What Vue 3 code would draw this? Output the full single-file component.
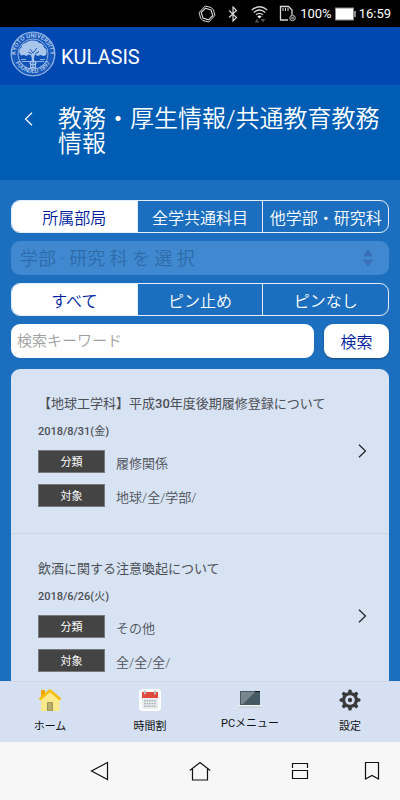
<template>
  <div class="screen">
    <div class="status">
      <svg class="status-rotate" width="18" height="18" viewBox="0 0 18 18">
        <g fill="none" stroke="#d8d8d8">
          <path d="M7.500 3.200 13 5l1.800 5.500-4.300 4.300L5 13 3.200 7.500z" stroke-width="1.100" />
          <path d="M1.200 7.500 7.200 1l6 1.500M16.800 10.500l-6 6.500-6-1.500" />
          <path d="M1.200 7.500 2.500 13l2.300 2.500M13.200 2.500 15.500 5l1.300 5.500" />
        </g>
      </svg>
      <svg class="status-bt" width="10" height="16" viewBox="0 0 10 16">
        <path d="M1 4.500 8.500 11.500 5 15V1l3.500 3.500L1 11.500" fill="none" stroke="#d8d8d8" stroke-width="1.200" />
      </svg>
      <svg class="status-wifi" width="17" height="18" viewBox="0 0 17 18">
        <g fill="none" stroke="#d8d8d8" stroke-width="1.300">
          <path d="M.8 5Q8.500-1.500 16.200 5M2.800 7.500q5.700-5 11.400 0M5 9.800q3.500-2.800 7 0" />
        </g>
        <path d="M6.300 11.200q2.200-1.500 4.400 0L8.500 13.500z" fill="#fff" />
        <path d="M6 14l2.200 3.500H3.800zM9.800 14h4.400L12 17.500z" fill="#555" />
      </svg>
      <svg class="status-sd" width="18" height="17" viewBox="0 0 18 17">
        <path d="M9 15H1.500V1.500h8L13 5v5" fill="none" stroke="#d8d8d8" stroke-width="1.300" />
        <path d="M4 3v3M6.500 3v3M9 3v3" stroke="#d8d8d8" />
        <circle cx="13.500" cy="13" r="2.800" fill="#222" stroke="#aaa" />
        <path d="m11.800 11.300 3.400 3.400m0-3.400-3.400 3.400" stroke="#aaa" />
      </svg>
      <span>100%</span>
      <svg class="status-battery" width="21" height="14" viewBox="0 0 21 14">
        <path d="M0 .5h19v3.500h2v6h-2v3.500H0z" fill="#8a8a8a" />
        <path d="M1 1.500h17v11H1z" fill="#fff" />
      </svg>
      <span>16:59</span>
    </div>

    <header class="brand">
      <svg width="46" height="46" viewBox="0 0 46 46">
        <defs>
          <path id="arc-top" d="M5.800 25.500A17.300 17.300 0 1 1 40.200 25.500" />
          <path id="arc-bottom" d="M3.800 27A19.800 19.800 0 0 0 42.200 27" />
        </defs>
        <circle cx="23" cy="23" r="21.800" fill="#1a5abb" stroke="#8fb2e3" stroke-width="1.300" />
        <circle cx="23" cy="23" r="15" fill="#0d50b6" stroke="#8fb2e3" />
        <text class="seal-text"><textPath href="#arc-top" startOffset="50%">KYOTO UNIVERSITY</textPath></text>
        <text class="seal-text"><textPath href="#arc-bottom" startOffset="50%">FOUNDED 1897</textPath></text>
        <path
          d="M9.500 22q-1-4 2-5.500 0-4 4-4.500 2.500-3 7-2.500 5-.5 7 2.500 4 .5 4.500 4.500 3 1.500 2.500 5.500 0 2.500-3 3l-3-1-3 1-2-1.500-1 1q-1 3 0 6l3 2h-9l3-2q.8-3-.5-6l-2-1-3 1.500-2-1.200-3 .7z"
          fill="#a9c5eb"
        />
        <path d="m20 18 3 4 4-5m-9 4 4 2m3 0 4-2.500" stroke="#1a5abb" fill="none" />
        <path d="M11 28.500h5m-4 2h22m-4-2h5" stroke="#8fb2e3" />
        <path d="M20.500 30.500h5v6h-5zM23 30.500v6M20.500 33.500h5" fill="#3a74c9" stroke="#a9c5eb" />
      </svg>
      <span class="brand-name">KULASIS</span>
    </header>

    <div class="heading">
      <button class="back" type="button" aria-label="戻る">
        <svg width="9" height="14" viewBox="0 0 9 14">
          <path d="M8 .8 1.500 7 8 13.200" fill="none" stroke="#fff" stroke-width="1.200" />
        </svg>
      </button>
      <h1>教務・厚生情報/共通教育教務情報</h1>
    </div>

    <main class="content">
      <div class="segment">
        <button
          v-for="(name, i) in departments"
          :key="name"
          type="button"
          :class="{ active: department === i }"
          @click="department = i"
        >
          {{ name }}
        </button>
      </div>

      <div class="picker">
        <select aria-label="学部・研究科" :disabled="department === 0">
          <option>学部 · 研究 科 を 選 択</option>
        </select>
        <svg width="10" height="18" viewBox="0 0 10 18">
          <path d="M5 0l5 7.500H0zM0 10.500h10L5 18z" fill="#3c6fba" />
        </svg>
      </div>

      <div class="segment">
        <button
          v-for="(name, i) in pins"
          :key="name"
          type="button"
          :class="{ active: pin === i }"
          @click="pin = i"
        >
          {{ name }}
        </button>
      </div>

      <form class="search" @submit.prevent>
        <input v-model="keyword" type="text" placeholder="検索キーワード" aria-label="検索キーワード" />
        <button type="submit">検索</button>
      </form>

      <ul class="notices">
        <li v-for="notice in notices" :key="notice.title">
          <a href="#" @click.prevent>
            <div class="notice-body">
              <h2>
                <span v-for="(run, i) in runs(notice.title)" :key="i" :class="{ latin: i % 2 }">{{ run }}</span>
              </h2>
              <p class="date">
                <span v-for="(run, i) in runs(notice.date)" :key="i" :class="{ latin: i % 2 }">{{ run }}</span>
              </p>
              <dl>
                <dt>分類</dt>
                <dd>{{ notice.category }}</dd>
                <dt>対象</dt>
                <dd>{{ notice.target }}</dd>
              </dl>
            </div>
            <svg width="9" height="14" viewBox="0 0 9 14">
              <path d="M1 .8 7.500 7 1 13.200" fill="none" stroke="#222" stroke-width="1.200" />
            </svg>
          </a>
        </li>
      </ul>
    </main>

    <nav class="tabs">
      <a href="#" @click.prevent>
        <svg width="24" height="22" viewBox="0 1 24 22">
          <path d="M3 2h4v8H3z" fill="#f0a500" />
          <path d="M3 11 12 3.500 21.500 11v12H3z" fill="#fbe98c" />
          <path d="M9.500 14.500h5V23h-5z" fill="#b9ad6c" stroke="#91874f" stroke-width=".8" />
          <path d="M1.500 11.500 12 2.500l10.500 9" fill="none" stroke="#f5bf0b" stroke-width="2.500" />
        </svg>
        ホーム
      </a>
      <a href="#" @click.prevent>
        <svg width="22" height="22" viewBox="1 1 22 22">
          <rect x="1" y="1" width="22" height="22" rx="4" fill="#fff" />
          <rect x="4" y="4" width="16" height="17" rx="1" fill="#e9edef" />
          <path d="M4 4h16v6H4z" fill="#e14a3c" />
          <path d="M7 2.500v4M17 2.500v4" stroke="#b8c0c5" stroke-width="1.800" />
          <path d="M6 12.800h12M6 15.500h12M6 18.200h12" stroke="#aeb6bb" stroke-width="1.600" stroke-dasharray="1.800 .7" />
        </svg>
        時間割
      </a>
      <a href="#" @click.prevent>
        <svg width="24" height="19" viewBox="0 -1 24 19">
          <path d="M2 1h20v14H2z" fill="#455a64" />
          <path d="M3 2h14L5 14H3z" fill="#78858b" />
          <path d="M0 15h24v1.500H0z" fill="#f5f5f0" />
          <path d="M1 17h22" stroke="#bcc3c6" />
          <path d="M17 1h5v1h-5z" fill="#111" />
        </svg>
        PCメニュー
      </a>
      <a href="#" @click.prevent>
        <svg width="22" height="22" viewBox="1 1 22 22">
          <g fill="#3a3a3c">
            <rect
              v-for="angle in [0, 45, 90, 135]"
              :key="angle"
              x="10.200"
              y="1.500"
              width="3.600"
              height="21"
              rx="1.500"
              :transform="`rotate(${angle} 12 12)`"
            />
            <circle cx="12" cy="12" r="8" />
          </g>
          <circle cx="12" cy="12" r="4.800" fill="#d5e1f2" />
          <circle cx="12" cy="12" r="2.200" fill="#3a3a3c" />
        </svg>
        設定
      </a>
    </nav>

    <div class="system">
      <button type="button" aria-label="戻る">
        <svg width="20" height="20" viewBox="0 0 20 20">
          <path d="M17.500 1.500v17L1.500 10z" />
        </svg>
      </button>
      <button type="button" aria-label="ホーム画面">
        <svg width="22" height="20" viewBox="0 0 22 20">
          <path d="M.8 9.500 11 1.500l10.200 8M3.500 8v11h15V8" />
        </svg>
      </button>
      <button type="button" aria-label="アプリ履歴">
        <svg width="18" height="20" viewBox="0 0 18 20">
          <path d="M1.500 7V2.500h15V7M1.500 9.500h15v8h-15z" />
        </svg>
      </button>
      <button class="system-last" type="button" aria-label="ブックマーク">
        <svg width="16" height="20" viewBox="0 0 16 20">
          <path d="M1.500 1.500h13V18L8 14.500 1.500 18z" />
        </svg>
      </button>
    </div>
  </div>
</template>

<script setup>
import { ref } from "vue";

const departments = ["所属部局", "全学共通科目", "他学部・研究科"];
const pins = ["すべて", "ピン止め", "ピンなし"];

const department = ref(0);
const pin = ref(0);
const keyword = ref("");

const notices = [
  {
    title: "【地球工学科】平成30年度後期履修登録について",
    date: "2018/8/31(金)",
    category: "履修関係",
    target: "地球/全/学部/",
  },
  {
    title: "飲酒に関する注意喚起について",
    date: "2018/6/26(火)",
    category: "その他",
    target: "全/全/全/",
  },
];

// odd entries are the digits and punctuation, drawn in a heavier weight
function runs(text) {
  return text.split(/([\d/()]+)/);
}
</script>

<style>
body {
  margin: 0;
  background: #1c6fbe;
}
</style>

<style scoped>
.screen {
  display: flex;
  flex-direction: column;
  height: 100vh;
  font-family: Roboto, "Noto Sans CJK JP", sans-serif;
  font-weight: 350;
  color: #fff;
}
.screen *,
.screen {
  box-sizing: border-box;
}
svg {
  flex: none;
}
button,
input,
select {
  margin: 0;
  padding: 0;
  border: 0;
  font: inherit;
  color: inherit;
  background: none;
}
a {
  color: inherit;
  text-decoration: none;
}
.status {
  flex: none;
  display: flex;
  align-items: center;
  justify-content: flex-end;
  height: 27px;
  padding-right: 9px;
  background: #000;
  font-size: 13px;
  font-weight: 400;
}
.status-rotate {
  margin-right: 12px;
}
.status-bt {
  margin-right: 13px;
}
.status-wifi {
  margin-right: 11px;
}
.status-sd {
  margin-right: 3px;
}
.status-battery {
  margin: 0 3px;
}
.brand {
  flex: none;
  display: flex;
  align-items: center;
  gap: 5px;
  height: 58px;
  padding: 0 10px 4px;
  background: #0048b1;
}
.brand-name {
  font-size: 20px;
  font-weight: 400;
  line-height: 24px;
  padding-top: 5px;
}
.seal-text {
  fill: #b9d0f0;
  font-size: 6px;
  font-weight: 500;
  text-anchor: middle;
}
.heading {
  flex: none;
  display: flex;
  align-items: flex-start;
  min-height: 95px;
  padding: 22px 10px 22px 0;
  background: #005db3;
}
.back {
  flex: none;
  display: flex;
  align-items: center;
  justify-content: center;
  width: 58px;
  height: 24px;
  padding-right: 2px;
}
h1 {
  margin: 0;
  font-size: 24px;
  font-weight: 350;
  line-height: 25px;
}
.content {
  flex: 1;
  min-height: 0;
  display: flex;
  flex-direction: column;
  gap: 8px;
  padding: 20px 11px 0;
  background: #1c6fbe;
  overflow-y: auto;
  scrollbar-width: none;
}
.segment {
  flex: none;
  display: flex;
  height: 33px;
  border: 1px solid #e4eefa;
  border-radius: 9px;
  overflow: hidden;
}
.segment button {
  flex: 1 1 0;
  font-size: 16px;
  white-space: nowrap;
}
.segment button + button {
  border-left: 1px solid #e4eefa;
}
.segment .active {
  background: #fff;
  color: #001e9c;
}
.picker {
  flex: none;
  display: flex;
  align-items: center;
  height: 34px;
  padding-right: 16px;
  border-radius: 9px;
  background: #4088d0;
}
.picker select {
  flex: 1;
  height: 34px;
  padding-left: 9px;
  appearance: none;
  font-size: 18px;
  color: #2f6ba8;
  opacity: 1;
}
.search {
  flex: none;
  display: flex;
  gap: 10px;
  margin-bottom: 3px;
}
.search input {
  flex: 1;
  min-width: 0;
  height: 34px;
  padding: 0 6px;
  border-radius: 9px;
  background: #fff;
  font-size: 15px;
  color: #333;
}
.search input::placeholder {
  color: #a0a0a0;
}
.search button {
  width: 65px;
  height: 34px;
  border-radius: 9px;
  background: #fff;
  box-shadow: 0 1px 2px rgba(0, 0, 0, 0.3);
  font-size: 16px;
  color: #001e9c;
}
.notices {
  flex: none;
  margin: 0;
  padding: 0;
  list-style: none;
  border-radius: 9px 9px 0 0;
  background: #d7e2f2;
  color: #4c4f55;
}
.notices li {
  border-bottom: 1px solid #cbd6e3;
}
.notices a {
  display: flex;
  align-items: center;
  padding: 25px 22px 26px 27px;
}
.notice-body {
  flex: 1;
}
h2 {
  margin: 0;
  font-size: 13px;
  font-weight: 400;
  line-height: 20px;
}
.date {
  margin: 8px 0;
  font-size: 11px;
  font-weight: 400;
  line-height: 20px;
}
.latin {
  font-weight: 500;
}
dl {
  display: grid;
  grid-template-columns: 67px 1fr;
  gap: 11px;
  margin: 0;
}
dt {
  height: 23px;
  border: 1px solid #77797c;
  background: #444;
  color: #fff;
  font-size: 11px;
  font-weight: 400;
  line-height: 23px;
  text-align: center;
}
dd {
  height: 23px;
  margin: 0;
  padding-top: 3px;
  font-size: 13px;
  line-height: 22px;
}
.tabs {
  flex: none;
  display: flex;
  height: 61px;
  padding-top: 7px;
  border-top: 1px solid #cdd9e6;
  background: #d5e1f2;
  color: #111;
}
.tabs a {
  flex: 1 1 0;
  display: flex;
  flex-direction: column;
  align-items: center;
  gap: 8px;
  font-size: 11px;
  font-weight: 400;
  line-height: 16px;
}
.system {
  flex: none;
  display: flex;
  height: 58px;
  padding-left: 50px;
  background: #f7f7f7;
}
.system button {
  flex: 1 1 0;
  display: flex;
  align-items: center;
  justify-content: center;
}
.system .system-last {
  flex: 0 0 50px;
  padding-right: 6px;
}
.system svg {
  fill: none;
  stroke: #111;
  stroke-width: 1.2;
}
</style>
